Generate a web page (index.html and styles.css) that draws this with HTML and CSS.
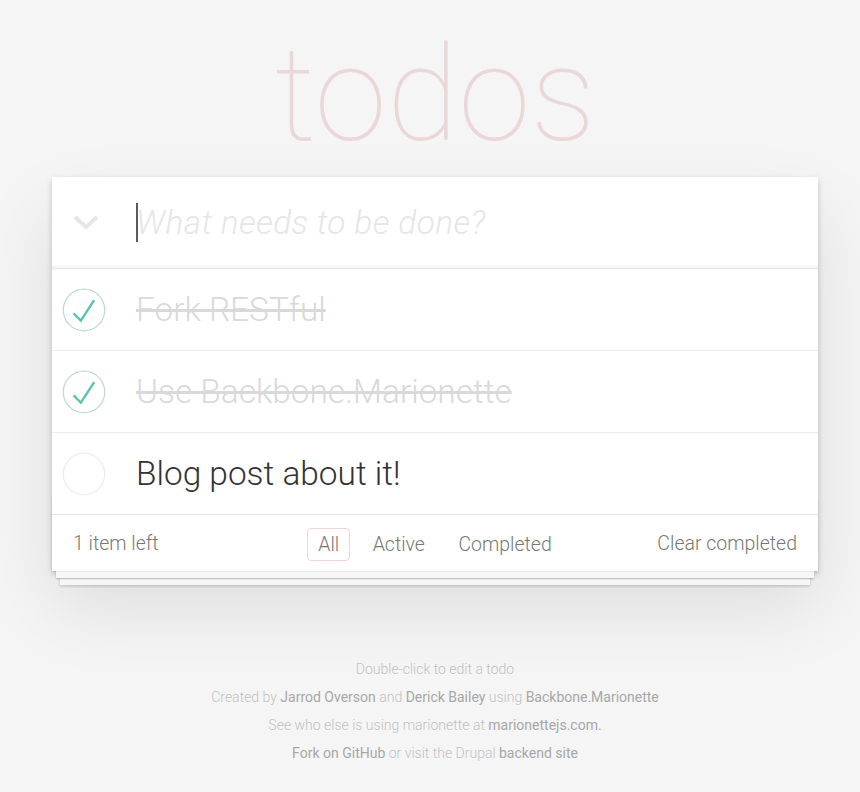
FILE: index.html
```html
<!DOCTYPE html>
<html lang="en">
<head>
<meta charset="utf-8">
<title>Backbone.Marionette • TodoMVC</title>
<link rel="stylesheet" href="styles.css">
</head>
<body>
<div class="page">
  <h1 class="title">todos</h1>
  <section class="todoapp">
    <header class="header">
      <svg class="toggle-all" width="26" height="16" viewBox="0 0 26 16" aria-hidden="true">
        <polyline points="2,2 13,12 24,2" fill="none" stroke="#e6e6e6" stroke-width="4"/>
      </svg>
      <input class="new-todo" placeholder="What needs to be done?">
      <span class="caret"></span>
    </header>
    <ul class="todo-list">
      <li class="todo completed">
        <svg class="toggle" width="44" height="44" viewBox="-3 -3 106 106" aria-hidden="true">
          <circle cx="50" cy="50" r="50" fill="none" stroke="#bddad5" stroke-width="3"/>
          <path fill="#5dc2af" d="M72 25L42 71 27 56l-4 4 20 20 34-52z"/>
        </svg>
        <label>Fork RESTful</label>
      </li>
      <li class="todo completed">
        <svg class="toggle" width="44" height="44" viewBox="-3 -3 106 106" aria-hidden="true">
          <circle cx="50" cy="50" r="50" fill="none" stroke="#bddad5" stroke-width="3"/>
          <path fill="#5dc2af" d="M72 25L42 71 27 56l-4 4 20 20 34-52z"/>
        </svg>
        <label>Use Backbone.Marionette</label>
      </li>
      <li class="todo">
        <svg class="toggle" width="44" height="44" viewBox="-3 -3 106 106" aria-hidden="true">
          <circle cx="50" cy="50" r="50" fill="none" stroke="#ededed" stroke-width="3"/>
        </svg>
        <label>Blog post about it!</label>
      </li>
    </ul>
    <footer class="footer">
      <span class="todo-count">1 item left</span>
      <ul class="filters">
        <li><a class="selected" href="#/">All</a></li>
        <li><a href="#/active">Active</a></li>
        <li><a href="#/completed">Completed</a></li>
      </ul>
      <button class="clear-completed">Clear completed</button>
    </footer>
  </section>
  <footer class="info">
    <p>Double-click to edit a todo</p>
    <p>Created by <a href="#">Jarrod Overson</a> and <a href="#">Derick Bailey</a> using <a href="#">Backbone.Marionette</a></p>
    <p>See who else is using marionette at <a href="#">marionettejs.com.</a></p>
    <p><a href="#">Fork on GitHub</a> or visit the Drupal <a href="#">backend site</a></p>
  </footer>
</div>
</body>
</html>
```

FILE: styles.css
```css
html, body {
  margin: 0;
  padding: 0;
}

body {
  background: #f5f5f5;
  color: #4d4d4d;
  font-family: Roboto, "Helvetica Neue", Arial, sans-serif;
  font-weight: 300;
  font-size: 19.5px;
  line-height: 1.4;
}

.page {
  width: 766px;
  margin-left: 52px;
}

.title {
  margin: 0 0 16px;
  padding-top: 30px;
  height: 131px;
  font-size: 131px;
  line-height: 131px;
  font-weight: 100;
  text-align: center;
  color: rgba(175, 47, 47, 0.15);
}

.todoapp {
  position: relative;
  background: #fff;
  box-shadow: 0 3px 6px 0 rgba(0, 0, 0, 0.2), 0 35px 70px 0 rgba(0, 0, 0, 0.1);
}

.header {
  position: relative;
  display: flex;
  align-items: center;
  box-shadow: inset 0 -3px 1px rgba(0, 0, 0, 0.03);
}

.toggle-all {
  position: absolute;
  left: 21px;
  top: 38px;
}

.new-todo {
  width: 100%;
  box-sizing: border-box;
  margin: 0;
  border: none;
  outline: none;
  background: transparent;
  padding: 22px 22px 23px 84px;
  font-family: inherit;
  font-weight: 300;
  font-size: 33.4px;
  line-height: 46px;
  height: 91px;
  color: inherit;
}

.new-todo::placeholder {
  font-style: italic;
  font-weight: 300;
  letter-spacing: 0.4px;
  color: #e6e6e6;
}

.caret {
  position: absolute;
  left: 84px;
  top: 26px;
  width: 2px;
  height: 39px;
  background: #5a5a5a;
}

.todo-list {
  list-style: none;
  margin: 0;
  padding: 0;
  border-top: 1px solid #e6e6e6;
}

.todo {
  display: flex;
  align-items: center;
  border-bottom: 1px solid #ededed;
  font-size: 33.4px;
}

.todo:last-child {
  border-bottom: none;
}

.toggle {
  flex: none;
  margin-left: 10px;
}

.todo label {
  flex: 1;
  padding: 20.5px 21px 20.5px 30px;
  line-height: 40px;
  color: #333;
  word-break: break-all;
}

.todo.completed label {
  color: #d9d9d9;
  text-decoration: line-through;
}

.footer {
  position: relative;
  display: flex;
  align-items: center;
  justify-content: space-between;
  height: 28px;
  padding: 15px 21px 13px;
  border-top: 1px solid #e6e6e6;
  color: #777;
  text-align: center;
}

.footer::before {
  content: '';
  position: absolute;
  right: 0;
  bottom: 0;
  left: 0;
  height: 70px;
  overflow: hidden;
  pointer-events: none;
  box-shadow:
    0 1.4px 1.4px rgba(0, 0, 0, 0.2),
    0 11px 0 -4px #f6f6f6,
    0 12.5px 1.4px -4px rgba(0, 0, 0, 0.2),
    0 22px 0 -8px #f6f6f6,
    0 23.7px 2.8px -8px rgba(0, 0, 0, 0.2);
}

.todo-count {
  position: relative;
  z-index: 1;
  line-height: 28px;
}

.filters {
  position: absolute;
  left: 0;
  right: 0;
  margin: 0;
  padding: 0;
  list-style: none;
  display: flex;
  justify-content: center;
}

.filters a {
  display: block;
  margin: 4px 6px;
  padding: 2px 9.75px;
  border: 1px solid transparent;
  border-radius: 4px;
  color: inherit;
  text-decoration: none;
  line-height: 27px;
}

.filters a.selected {
  border-color: rgba(175, 47, 47, 0.2);
}

.clear-completed {
  position: relative;
  z-index: 1;
  margin: 0;
  padding: 0;
  border: none;
  background: none;
  font-family: inherit;
  font-weight: 300;
  font-size: 19.5px;
  line-height: 28px;
  color: inherit;
}

.info {
  margin-top: 91px;
  color: #bfbfbf;
  font-size: 14px;
  text-align: center;
  text-shadow: 0 1px 0 rgba(255, 255, 255, 0.5);
}

.info p {
  margin: 14px 0;
  line-height: 1;
}

.info a {
  color: #a6a6a6;
  font-weight: 400;
  text-decoration: none;
}
```
